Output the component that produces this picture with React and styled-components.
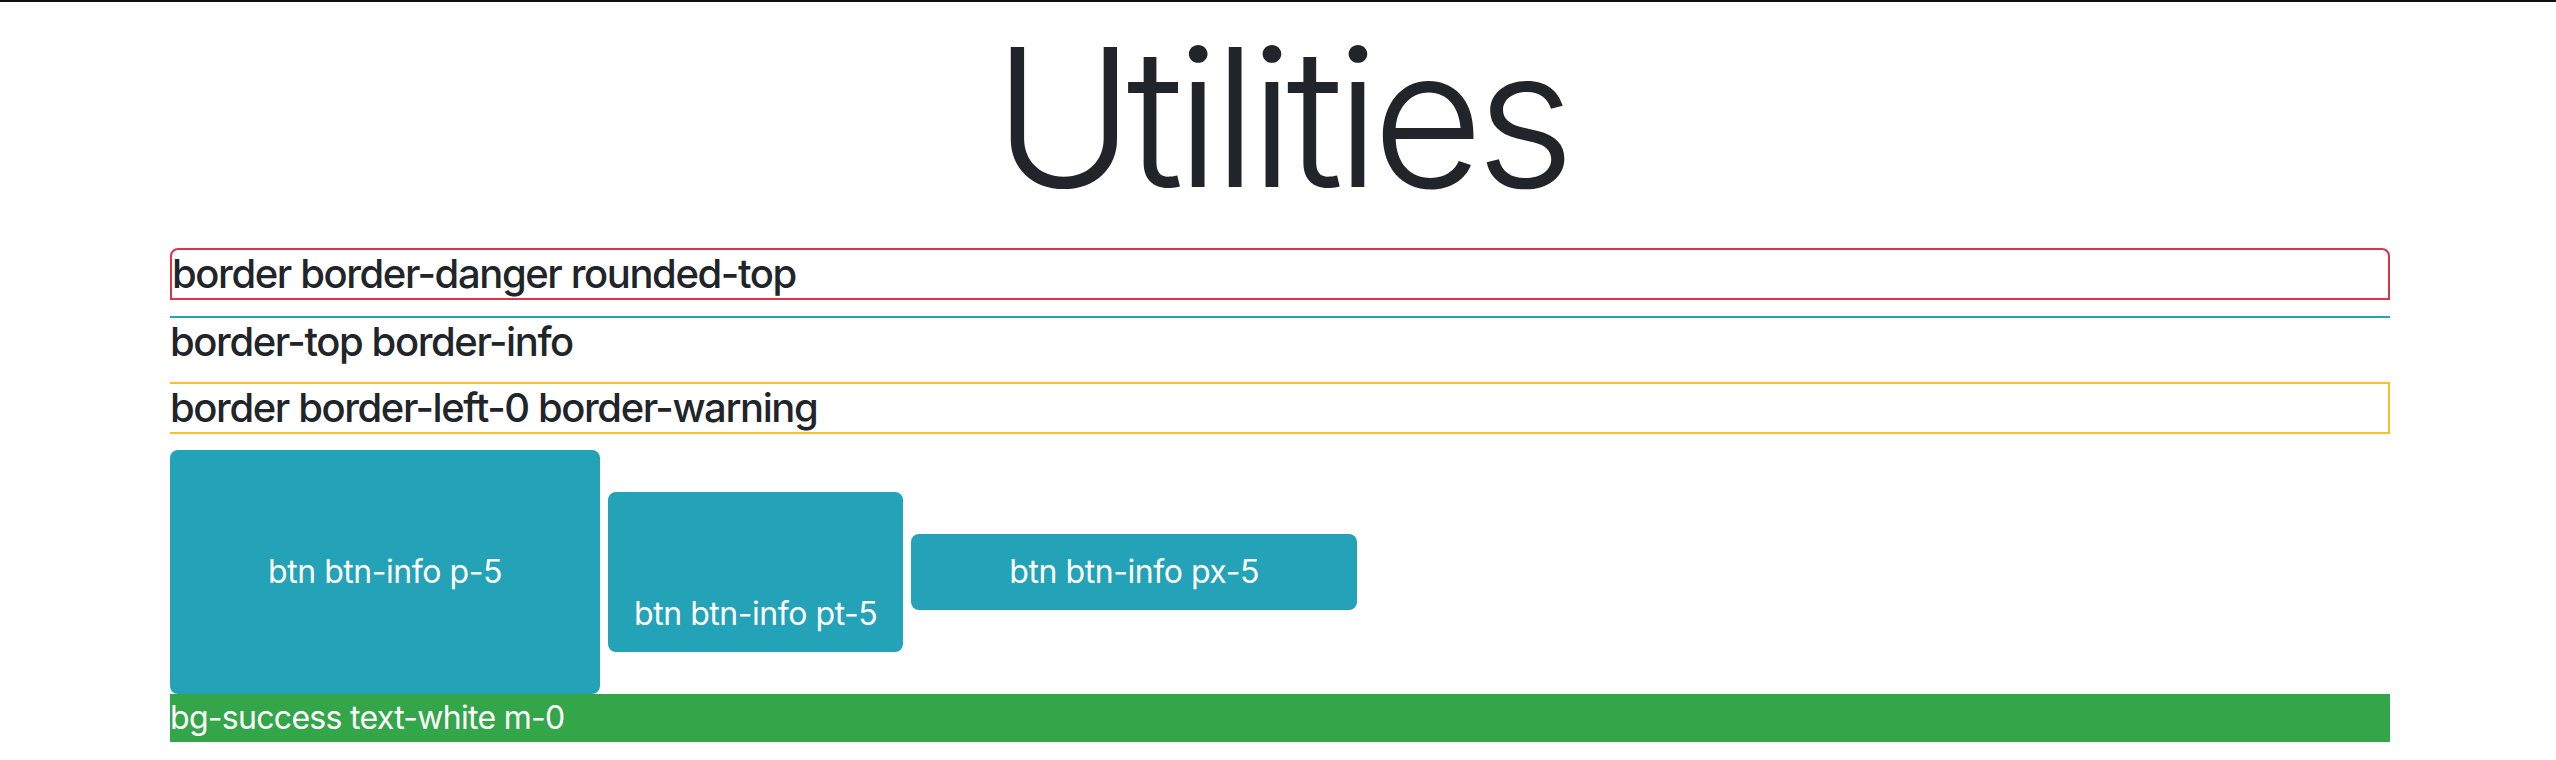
import React from "react";
import styled, { createGlobalStyle, css } from "styled-components";

const GlobalStyle = createGlobalStyle`
  html, body { margin: 0; padding: 0; background: #fff; }
  body {
    border-top: 2px solid #111;
    font-family: Inter, "Noto Sans", "Liberation Sans", sans-serif;
    color: #212529;
    font-size: 32px;
    line-height: 1.5;
  }
  * { box-sizing: border-box; }
`;

const Container = styled.div`
  width: 2220px;
  margin-left: 170px;
`;

const Title = styled.h1`
  margin: 0 0 16px;
  font-size: 192px;
  font-weight: 300;
  line-height: 1.2;
  letter-spacing: -8px;
  text-align: center;
`;

const borders = {
  danger: css`
    border: 2px solid #d8344a;
    border-radius: 8px 8px 0 0;
  `,
  info: css`
    border-top: 2px solid #23a2b8;
  `,
  warning: css`
    border: 2px solid #fbbd2a;
    border-left: 0;
  `,
};

const BorderHeading = styled.h5`
  margin: 0 0 16px;
  font-size: 40px;
  font-weight: 500;
  line-height: 1.2;
  letter-spacing: -1.4px;
  ${(p) => borders[p.$variant]}
`;

const ButtonRow = styled.div`
  font-size: 32px;
  line-height: 1.5;
`;

const InfoButton = styled.button`
  display: inline-block;
  vertical-align: middle;
  margin: 0 8px 0 0;
  font-family: inherit;
  font-size: 32px;
  font-weight: 400;
  line-height: 1.5;
  letter-spacing: -0.45px;
  color: #fff;
  background: #23a2b8;
  border: 2px solid #23a2b8;
  border-radius: 8px;
  padding: ${(p) => p.$pad};
  cursor: pointer;
`;

const SuccessBar = styled.p`
  margin: 0;
  background: #33a64a;
  color: #fff;
  font-size: 32px;
  line-height: 1.5;
  letter-spacing: -0.7px;
`;

export default function App() {
  return (
    <>
      <GlobalStyle />
      <Container>
        <Title>Utilities</Title>
        <BorderHeading $variant="danger">border border-danger rounded-top</BorderHeading>
        <BorderHeading $variant="info">border-top border-info</BorderHeading>
        <BorderHeading $variant="warning">border border-left-0 border-warning</BorderHeading>
        <ButtonRow>
          <InfoButton $pad="96px">btn btn-info p-5</InfoButton>
          <InfoButton $pad="96px 24px 12px">btn btn-info pt-5</InfoButton>
          <InfoButton $pad="12px 96px">btn btn-info px-5</InfoButton>
        </ButtonRow>
        <SuccessBar>bg-success text-white m-0</SuccessBar>
      </Container>
    </>
  );
}
